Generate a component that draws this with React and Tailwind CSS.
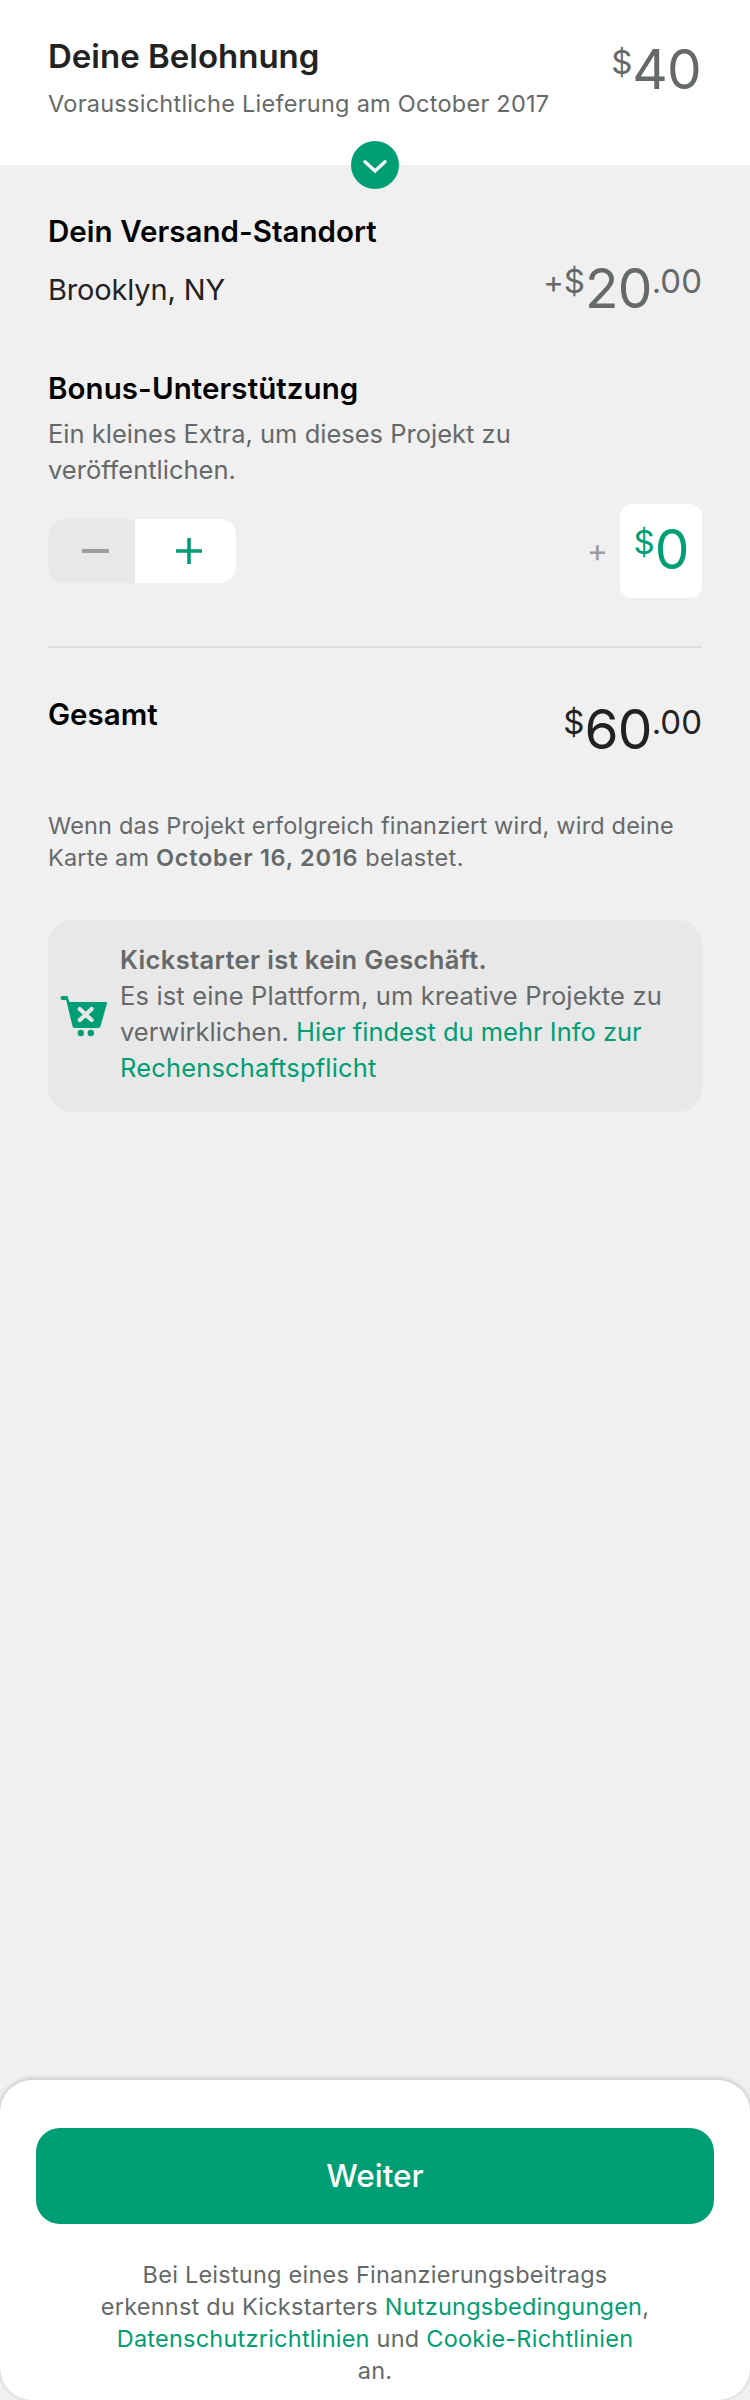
function Price({ prefix, symbol, amount, cents, className }) {
  return (
    <div className={`flex items-start ${className}`}>
      {prefix && <span className="mt-0.5 text-[31px] leading-10">{prefix}</span>}
      <span className="mt-px text-[33px] leading-10">{symbol}</span>
      <span className="text-[55px] leading-14 tracking-[-0.8px]">{amount}</span>
      {cents && <span className="mt-px text-[33px] leading-10">{cents}</span>}
    </div>
  );
}

export default function App() {
  return (
    <div className="flex h-[2400px] w-[750px] flex-col bg-[#f0f0f0] font-['Inter',sans-serif]">
      <header className="relative flex h-[165px] justify-between bg-white px-12 pt-9">
        <div>
          <h1 className="text-[33px] leading-10 font-semibold text-[#222]">Deine Belohnung</h1>
          <p className="mt-3 text-[23.5px] leading-8 tracking-[0.26px] text-[#656969]">Voraussichtliche Lieferung am October 2017</p>
        </div>
        <Price symbol="$" amount="40" className="mt-[5px] mr-px text-[#656969]" />
        <svg className="absolute top-[141px] left-[351px] size-12" viewBox="0 0 48 48" fill="none">
          <circle cx="24" cy="24" r="24" fill="#009e74" />
          <path d="M14 20.8 24 30 34 20.8" stroke="#fff" strokeWidth="3.3" strokeLinecap="round" />
        </svg>
      </header>

      <main className="flex flex-1 flex-col px-12">
        <h2 className="mt-[46px] text-[29.5px] leading-10 font-semibold tracking-[0.04px] text-black">Dein Versand-Standort</h2>
        <div className="flex h-[60px] justify-between">
          <span className="mt-[19px] text-[29px] leading-10 tracking-[-0.15px] text-[#222]">Brooklyn, NY</span>
          <Price prefix="+" symbol="$" amount="20" cents=".00" className="mt-[9px] text-[#656969]" />
        </div>

        <h2 className="mt-[57px] text-[29.5px] leading-10 font-semibold tracking-[0.08px] text-black">Bonus-Unterstützung</h2>
        <p className="mt-2 w-[500px] text-[25.5px] leading-9 text-[#656969]">Ein kleines Extra, um dieses Projekt zu veröffentlichen.</p>

        <div className="mt-4 flex h-[94px] items-center">
          <div className="flex h-16 w-[188px] overflow-hidden rounded-2xl bg-white">
            <div className="w-[87px] bg-[#e8e8e8] pt-[30px] pl-[34px]">
              <div className="h-1 w-[27px] bg-[#9b9e9e]" />
            </div>
            <svg className="mt-[18px] ml-10 size-7" viewBox="0 0 28 28" stroke="#009e74" strokeWidth="3.6">
              <path d="M1 14H27M14 1V27" />
            </svg>
          </div>
          <span className="mr-3 ml-auto text-[32px] leading-10 text-[#9b9e9e]">+</span>
          <div className="flex h-[94px] w-[82px] justify-center rounded-xl bg-white pt-[17px]">
            <Price symbol="$" amount="0" className="text-[#009e74]" />
          </div>
        </div>

        <div className="mt-12 h-0.5 bg-[#dcdedd]" />

        <div className="mt-[46px] flex h-[70px] justify-between">
          <h2 className="text-[29.5px] leading-10 font-semibold text-black">Gesamt</h2>
          <Price symbol="$" amount="60" cents=".00" className="mt-[7px] text-[#222]" />
        </div>

        <p className="mt-[46px] text-[23.5px] leading-8 tracking-[0.18px] whitespace-nowrap text-[#656969]">
          Wenn das Projekt erfolgreich finanziert wird, wird deine<br />
          Karte am <b className="font-semibold tracking-[0.75px]">October 16, 2016</b><span className="tracking-[0.4px]"> belastet.</span>
        </p>

        <div className="mt-[46px] flex h-48 rounded-3xl bg-[#e8e8e8] pt-[22px]">
          <svg className="mt-[53px] ml-3 h-[42px] w-12 shrink-0" viewBox="20 25 48 42">
            <path d="M22.5 26H27.5L29.4 32H66Q67.4 32 67 33.4L60.5 56.3Q60 58 58.3 58H34.5Q32.9 58 32.5 56.3L26.2 30H22.5A2 2 0 0 1 22.5 26Z" fill="#009e74" />
            <path d="M39.8 38.9 51.6 50.1M51.6 38.9 39.8 50.1" stroke="#e8e8e8" strokeWidth="4.2" strokeLinecap="round" />
            <circle cx="40.8" cy="63" r="3.2" fill="#009e74" />
            <circle cx="50.8" cy="63" r="3.2" fill="#009e74" />
          </svg>
          <p className="ml-3 text-[25.5px] leading-9 whitespace-nowrap text-[#656969]">
            <b className="font-semibold tracking-[0.36px]">Kickstarter ist kein Geschäft.</b><br />
            <span className="tracking-[0.15px]">Es ist eine Plattform, um kreative Projekte zu</span><br />
            verwirklichen. <a className="text-[#009e74]">Hier findest du mehr Info zur<br />
            <span className="tracking-[0.15px]">Rechenschaftspflicht</span></a>
          </p>
        </div>
      </main>

      <footer className="h-80 rounded-[32px] bg-white px-9 pt-12 shadow-[0_-1px_5px_rgba(0,0,0,0.22)]">
        <button className="h-24 w-full rounded-3xl bg-[#009e74] text-[31.5px] font-medium text-white">Weiter</button>
        <p className="mt-[35px] text-center text-[23.5px] leading-8 tracking-[0.23px] text-[#656969]">
          Bei Leistung eines Finanzierungsbeitrags<br />
          erkennst du Kickstarters <a className="text-[#009e74]">Nutzungsbedingungen</a>,<br />
          <a className="text-[#009e74]">Datenschutzrichtlinien</a> und <a className="text-[#009e74]">Cookie-Richtlinien</a><br />
          an.
        </p>
      </footer>
    </div>
  );
}
